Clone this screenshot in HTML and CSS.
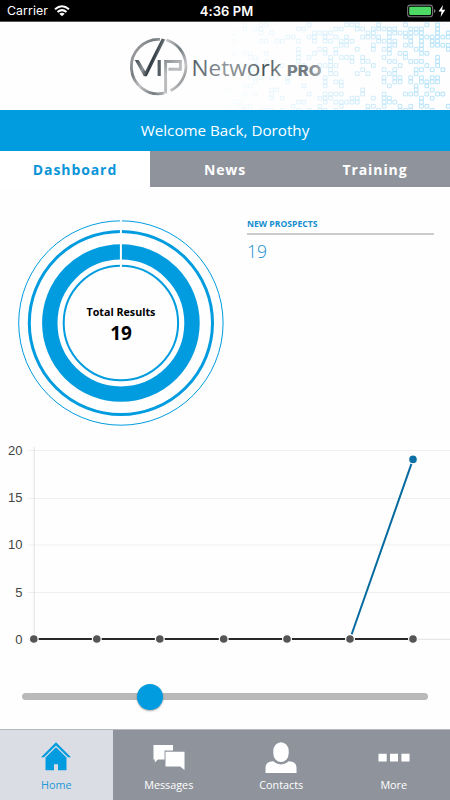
FILE: index.html
```html
<!DOCTYPE html>
<html lang="en">
<head>
<meta charset="utf-8">
<title>VIP Network PRO</title>
<link rel="stylesheet" href="styles.css">
</head>
<body>
<div class="app">
  <div class="status">
    <div class="carrier">Carrier
      <svg width="16" height="12" viewBox="0 0 16 12" fill="none" stroke="#fff" stroke-width="2"><path d="M1 4.3Q8-1.8 15 4.3M3.5 7Q8 3.2 12.5 7"/><path d="M8 11.3 5.3 8.8Q8 6.6 10.7 8.8Z" fill="#fff" stroke="none"/></svg>
    </div>
    <div class="time">4:36 PM</div>
    <div class="battery">
      <svg width="39" height="14" viewBox="0 0 39 14"><rect x=".6" y="1.1" width="25" height="11.6" rx="2.8" fill="none" stroke="#777" stroke-width="1.1"/><rect x="2.2" y="2.7" width="21.8" height="8.4" rx="1.4" fill="#4cd964"/><path d="M27 5v4q1.5-.5 1.5-2T27 5Z" fill="#777"/><path d="M36 1 31.5 7.6H34.5L33.6 13 38.3 5.8H35.1Z" fill="#fff"/></svg>
    </div>
  </div>

  <header class="header">
    <svg class="brand" width="450" height="88" viewBox="0 22 450 88">
      <defs>
        <linearGradient id="fade" gradientUnits="userSpaceOnUse" x1="225" y1="0" x2="450" y2="0"><stop offset="0" stop-color="#b5e2f8" stop-opacity=".06"/><stop offset=".5" stop-color="#b5e2f8" stop-opacity=".5"/><stop offset="1" stop-color="#ade0f9" stop-opacity=".95"/></linearGradient>
        <linearGradient id="ring" x1="0" y1=".2" x2="1" y2=".8"><stop offset="0" stop-color="#a5a6a8"/><stop offset=".22" stop-color="#737a7e"/><stop offset=".4" stop-color="#c3c3c5"/><stop offset=".65" stop-color="#717a7e"/><stop offset=".85" stop-color="#c7c7c9"/><stop offset="1" stop-color="#777d80"/></linearGradient>
        <linearGradient id="vee" gradientUnits="userSpaceOnUse" x1="136" y1="60" x2="165" y2="70"><stop offset="0" stop-color="#475157"/><stop offset=".3" stop-color="#8b9194"/><stop offset=".5" stop-color="#303b42"/><stop offset=".8" stop-color="#9da1a3"/><stop offset="1" stop-color="#606a6f"/></linearGradient>
        <linearGradient id="pee" gradientUnits="userSpaceOnUse" x1="164" y1="61" x2="184" y2="90"><stop offset="0" stop-color="#8a9094"/><stop offset=".35" stop-color="#bcbec0"/><stop offset=".7" stop-color="#b9babc"/><stop offset="1" stop-color="#d0d0d2"/></linearGradient>
        <linearGradient id="word" gradientUnits="userSpaceOnUse" x1="193" y1="60" x2="322" y2="76"><stop offset="0" stop-color="#536068"/><stop offset=".25" stop-color="#90979b"/><stop offset=".4" stop-color="#7e868a"/><stop offset=".55" stop-color="#46535a"/><stop offset=".7" stop-color="#858b8f"/><stop offset=".85" stop-color="#6d767b"/><stop offset="1" stop-color="#a8acae"/></linearGradient>
      </defs>
      <path id="mosaic" fill="none" stroke="url(#fade)" stroke-width="1"/>
      <path d="M160 39.4A27.2 27.2 0 1 0 164 93.2M166.5 40A27.2 27.2 0 0 1 170.5 90.6" fill="none" stroke="url(#ring)" stroke-width="2.8"/>
      <path d="M134.8 60H138.8L145.3 71.2 161.8 38.5 165.2 39.5 146.8 76.2H143.8Z" fill="url(#vee)"/>
      <path d="M159.2 60V76" stroke="#555e63" stroke-width="3.2"/>
      <path d="M165.6 93.5V61.5H180.4V69.2H168.5" fill="none" stroke="url(#pee)" stroke-width="2.9"/>
      <text class="word" x="191.5" y="76.3" textLength="90" lengthAdjust="spacingAndGlyphs" fill="url(#word)">Network</text>
      <text class="pro" x="287" y="76" textLength="34.5" lengthAdjust="spacingAndGlyphs" fill="url(#word)">PRO</text>
    </svg>
  </header>

  <div class="welcome">Welcome Back, Dorothy</div>
  <nav class="tabs"><a class="tab active">Dashboard</a><a class="tab">News</a><a class="tab">Training</a></nav>

  <main class="main">
    <section class="summary">
      <div class="donut">
        <svg width="206" height="206" viewBox="17.8 220.2 206 206" fill="none" stroke="#009cdf">
          <circle cx="120.7" cy="323.2" r="102.2" stroke-width="1"/>
          <circle cx="120.7" cy="323.2" r="91.6" stroke-width="3"/>
          <circle cx="120.7" cy="323.2" r="71.1" stroke-width="15.4"/>
          <circle cx="120.7" cy="323.2" r="57.2" stroke-width="2"/>
          <path d="M120.7 220V268" stroke="#fff" stroke-width="2"/>
        </svg>
        <div class="total"><span class="total-label">Total Results</span><strong class="total-value">19</strong></div>
      </div>
      <div class="prospects"><h2 class="prospects-title">NEW PROSPECTS</h2><div class="prospects-value">19</div></div>
    </section>

    <svg class="chart" width="450" height="212" viewBox="0 440 450 212">
      <path d="M28 450.5H450M28 498.5H450M28 545H450M28 592.5H450" stroke="#efefef"/>
      <path d="M28 639.3H450" stroke="#e2e2e2"/>
      <path d="M34.2 447V639" stroke="#e3e3e3"/>
      <g class="ticks"><text x="22.5" y="454.8">20</text><text x="22.5" y="502.3">15</text><text x="22.5" y="549.3">10</text><text x="22.5" y="596.8">5</text><text x="22.5" y="643.8">0</text></g>
      <path d="M350 639 413 459.4" stroke="#056a9f" stroke-width="2"/>
      <path d="M34 639H413" stroke="#282828" stroke-width="2"/>
      <g fill="#555" stroke="#fff" stroke-width="1.2">
        <circle cx="33.8" cy="639" r="4.4"/><circle cx="96.8" cy="639" r="4.4"/><circle cx="159.8" cy="639" r="4.4"/><circle cx="223.7" cy="639" r="4.4"/><circle cx="287" cy="639" r="4.4"/><circle cx="350" cy="639" r="4.4"/><circle cx="413" cy="639" r="4.4"/><circle cx="413" cy="459.4" r="4.4" fill="#0b70a4"/>
      </g>
    </svg>
    <div class="slider"><div class="thumb"></div></div>
  </main>

  <nav class="bottom">
    <a class="item current"><svg width="32" height="32" viewBox="0 0 32 32" fill="#009cdf"><path d="M16 1.2 1 16.2H4L16 4.4 28 16.2H31Z"/><path d="M16 6.2 5.5 16.5V29.3H14V23.3H18V29.3H26.5V16.5Z"/></svg>Home</a>
    <a class="item"><svg width="32" height="32" viewBox="0 0 32 32" fill="#fff"><path d="M.5 4H20V9.5H11.5V18.5H5L1.8 21.5V18.5H.5Z"/><path d="M12.5 10.7H31.5V29L27.2 25.5H12.5Z"/></svg>Messages</a>
    <a class="item"><svg width="32" height="32" viewBox="0 0 32 32" fill="#fff"><rect x="8.3" y="1.2" width="15.4" height="19.8" rx="7.7" ry="8.8"/><path d="M.5 32V27Q.5 20.3 8.5 20.3 11.5 23.4 16 23.4T23.5 20.3Q31.5 20.3 31.5 27V32Z"/></svg>Contacts</a>
    <a class="item"><svg width="32" height="32" viewBox="0 0 32 32" fill="#fff"><path d="M.5 12.8H8.7V20.6H.5ZM12 12.8H20V20.6H12ZM23.4 12.8H31.5V20.6H23.4Z"/></svg>More</a>
  </nav>
</div>
<script src="mosaic.js"></script>
</body>
</html>
```
FILE: styles.css
```css
* { box-sizing: border-box; }
body { margin: 0; background: #fff; font-family: "Open Sans", "Noto Sans", sans-serif; }
.app { width: 450px; height: 800px; display: flex; flex-direction: column; overflow: hidden; background: #fefefe; }
.status { height: 22px; flex: none; display: grid; grid-template-columns: 1fr auto 1fr; align-items: center; padding: 0 4px 0 7px; background: #000; color: #fff; font-family: Inter, sans-serif; font-size: 12.3px; border-bottom: 1px solid #555; }
.carrier { display: flex; align-items: center; gap: 6px; letter-spacing: .1px; }
.time { font-weight: 600; font-size: 13px; letter-spacing: .1px; }
.battery { display: flex; justify-content: flex-end; }
.header { height: 88px; flex: none; }
.brand, .chart { display: block; }
.word { font-family: "Open Sans", sans-serif; font-size: 21.5px; }
.pro { font-family: Inter, sans-serif; font-size: 15px; font-weight: 800; }
.welcome { height: 41px; flex: none; display: flex; align-items: center; justify-content: center; background: #009cdf; color: #fff; font-size: 15.2px; padding-bottom: 1px; }
.tabs { height: 37px; flex: none; display: grid; grid-template-columns: repeat(3, 1fr); border-bottom: 1px solid #fff; }
.tab { display: flex; align-items: center; justify-content: center; background: #8f949c; color: #fff; font-size: 14px; font-weight: 700; letter-spacing: .9px; }
.tab.active { background: #fff; color: #0b94d8; }
.main { height: 541px; flex: none; padding-top: 32px; }
.summary { display: flex; height: 220px; padding-left: 18px; gap: 23px; }
.donut { display: grid; width: 206px; height: 206px; }
.donut > * { grid-area: 1 / 1; }
.total { display: flex; flex-direction: column; align-items: center; justify-content: center; color: #000; padding-top: 3px; }
.total-label { font-size: 10.7px; font-weight: 700; line-height: 17px; }
.total-value { font-size: 19px; line-height: 24px; }
.prospects { width: 187px; color: #168ed0; }
.prospects-title { margin: 0; height: 15px; font-size: 8.6px; line-height: 8px; border-bottom: 2px solid #ccc; }
.prospects-value { font-size: 17.5px; font-weight: 300; line-height: 24px; padding-top: 4px; }
.ticks { font-family: "Liberation Sans", sans-serif; font-size: 13px; fill: #444; text-anchor: end; }
.slider { width: 406px; height: 7px; margin: 41px 0 0 22px; border-radius: 4px; background: #b9b9b9; display: flex; align-items: center; padding-left: 115px; }
.thumb { width: 26px; height: 26px; flex: none; border-radius: 50%; background: #009cdf; box-shadow: 0 1px 2px rgba(0,0,0,.35); }
.bottom { height: 71px; flex: none; display: grid; grid-template-columns: repeat(4, 1fr); border-top: 1px solid #b5b8bd; background: #8f949c; }
.item { display: flex; flex-direction: column; align-items: center; padding-top: 11px; color: #fff; font-size: 10.8px; line-height: 15px; gap: 4px; }
.item.current { background: #dadde3; color: #2399d8; }
```
FILE: mosaic.js
```js
// Outlined squares that grow denser towards the right edge of the header.
const COL = 5.35, ROW = 4.07, SIDE = 3.7;
let seed = 90210;
const random = () => {
  seed = (seed + 0x6d2b79f5) | 0;
  let t = Math.imul(seed ^ (seed >>> 15), 1 | seed);
  t = (t + Math.imul(t ^ (t >>> 7), 61 | t)) ^ t;
  return ((t ^ (t >>> 14)) >>> 0) / 4294967296;
};
let d = "";
for (let y = 23; y < 110; y += ROW) {
  for (let x = 227; x < 450; x += COL) {
    const t = (x - 227) / 223;
    if (random() < 0.22 + 0.24 * t) {
      d += `M${x.toFixed(1)} ${y.toFixed(1)}h${SIDE}v${SIDE}h-${SIDE}z`;
    }
  }
}
document.getElementById("mosaic").setAttribute("d", d);
```
